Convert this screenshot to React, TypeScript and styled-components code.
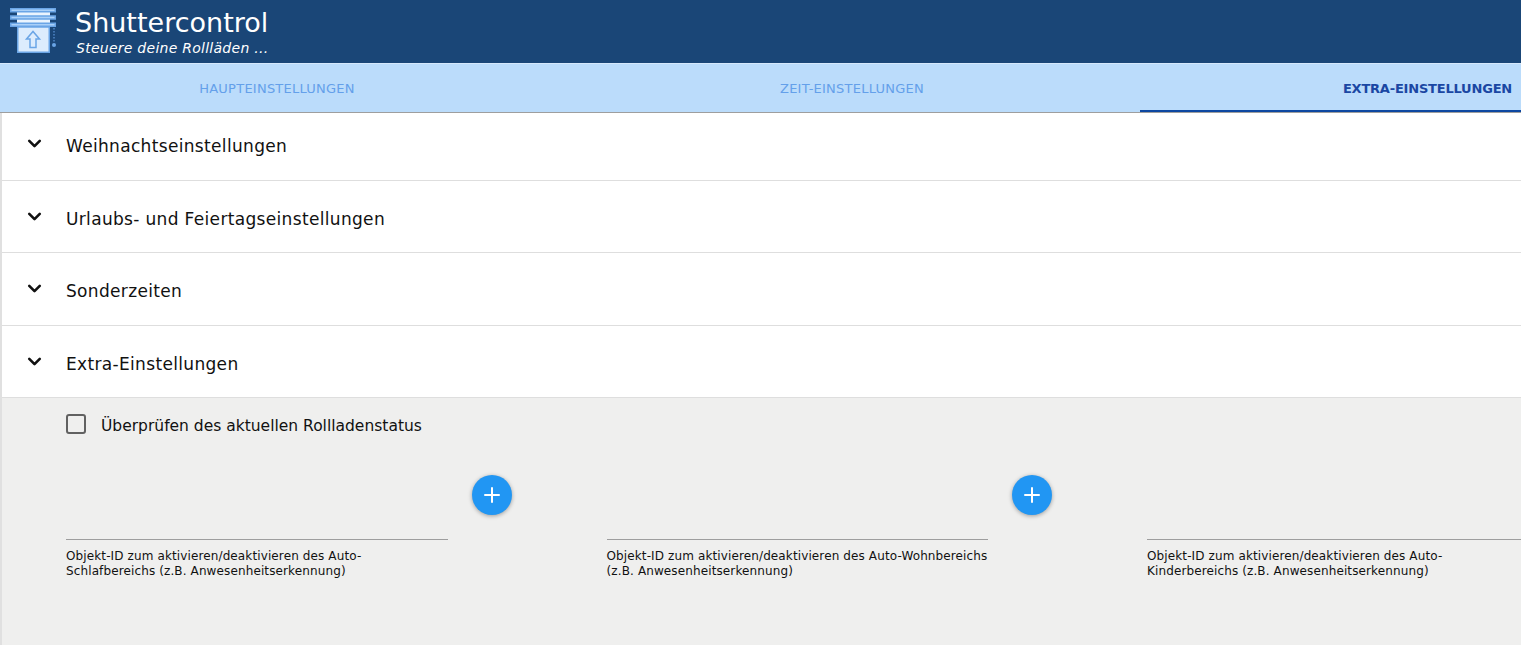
import React from 'react';
import styled, { createGlobalStyle } from 'styled-components';
import { ChevronDown, Plus } from 'lucide-react';

const GlobalStyle = createGlobalStyle`
  html, body {
    margin: 0;
    padding: 0;
    background: #fff;
    overflow: hidden;
  }
  body {
    font-family: "DejaVu Sans", "Liberation Sans", sans-serif;
    color: #000;
  }
`;

const Page = styled.div`
  width: 1521px;
  height: 645px;
  display: flex;
  flex-direction: column;
  overflow: hidden;
`;

const Header = styled.header`
  height: 63px;
  flex: none;
  background: #1a4677;
  display: flex;
  align-items: flex-start;
  padding-left: 10px;
  gap: 17px;
  box-sizing: border-box;
`;

const LogoWrap = styled.div`
  padding-top: 8px;
  line-height: 0;
`;

const Titles = styled.div`
  display: flex;
  flex-direction: column;
  color: #fff;
`;

const Title = styled.div`
  font-size: 27px;
  line-height: 32px;
  margin-top: 7px;
`;

const Subtitle = styled.div`
  font-size: 14px;
  line-height: 18px;
  font-style: italic;
  letter-spacing: 0.26px;
  padding-left: 1px;
`;

const Tabs = styled.nav`
  height: 50px;
  flex: none;
  display: flex;
  background: #bbdcfb;
  border-top: 1px solid #d5e8fb;
  border-bottom: 1px solid #9e9e9e;
  box-sizing: border-box;
`;

const Tab = styled.div<{ $active?: boolean; $width: number; $pad: number }>`
  width: ${(p) => p.$width}px;
  flex: none;
  box-sizing: border-box;
  display: flex;
  align-items: center;
  justify-content: ${(p) => (p.$active ? 'flex-end' : 'center')};
  padding-right: ${(p) => p.$pad}px;
  font-size: 13px;
  letter-spacing: ${(p) => (p.$active ? '-0.2px' : '0.24px')};
  font-weight: ${(p) => (p.$active ? 700 : 400)};
  color: ${(p) => (p.$active ? '#1a47a3' : '#64a0ea')};
  box-shadow: ${(p) => (p.$active ? 'inset 0 -2px 0 #0d47a1' : 'none')};
`;

const Accordion = styled.div`
  flex: 1;
  display: flex;
  flex-direction: column;
  border-left: 2px solid #e0e0e0;
  min-height: 0;
`;

const Row = styled.div<{ $height: number; $first?: boolean }>`
  height: ${(p) => p.$height}px;
  flex: none;
  box-sizing: border-box;
  border-bottom: 1px solid #dedede;
  display: flex;
  align-items: center;
  padding: ${(p) => (p.$first ? '0 0 2px 22px' : '4px 0 0 22px')};
`;

const Chevron = styled(ChevronDown)`
  flex: none;
  width: 21px;
  height: 21px;
  margin-top: -5px;
  color: #111;
`;

const RowTitle = styled.div`
  margin-left: 21px;
  font-size: 17px;
  letter-spacing: 0.33px;
  color: #111;
`;

const Panel = styled.div`
  flex: 1;
  background: #efefee;
  padding: 15px 0 0 64px;
  overflow: hidden;
`;

const CheckRow = styled.div`
  display: flex;
  align-items: center;
  gap: 15px;
  height: 22px;
`;

const CheckBox = styled.div`
  width: 20px;
  height: 20px;
  box-sizing: border-box;
  border: 2px solid #616161;
  border-radius: 3px;
`;

const CheckLabel = styled.div`
  font-size: 15.5px;
  color: #111;
  margin-top: 4px;
`;

const Columns = styled.div`
  display: flex;
  margin-top: 40px;
  width: 1700px;
`;

const Column = styled.div`
  width: 540.5px;
  flex: none;
`;

const AddCell = styled.div`
  width: 445.6px;
  display: flex;
  justify-content: flex-end;
`;

const AddButton = styled.div`
  width: 40px;
  height: 40px;
  border-radius: 50%;
  background: #2196f3;
  color: #fff;
  display: flex;
  align-items: center;
  justify-content: center;
  box-shadow: 0 1px 4px rgba(0, 0, 0, 0.35);
`;

const Field = styled.div`
  width: 381.7px;
  margin-top: 24px;
  border-top: 1px solid #9e9e9e;
  padding-top: 9px;
  font-size: 12px;
  line-height: 15px;
  letter-spacing: 0.12px;
  color: #111;
`;

const Logo = () => (
  <svg width="48" height="48" viewBox="0 0 48 48">
    <rect x="7" y="3" width="33" height="14" fill="#eaf4fe" />
    <rect x="7.75" y="19" width="31.5" height="25.25" fill="#dcecfd" stroke="#6aa5e6" strokeWidth="1.5" />
    <rect x="0.75" y="0.75" width="44.5" height="3" fill="#a9d0f8" stroke="#6aa5e6" strokeWidth="1.5" />
    <rect x="0.75" y="8" width="44.5" height="3" fill="#a9d0f8" stroke="#6aa5e6" strokeWidth="1.5" />
    <rect x="0.75" y="15.25" width="44.5" height="3" fill="#a9d0f8" stroke="#6aa5e6" strokeWidth="1.5" />
    <path d="M16.5 31 L23 23.5 L29.5 31 H26 V39.5 H20 V31 Z" fill="#dcecfd" stroke="#6aa5e6" strokeWidth="1.5" strokeLinejoin="miter" />
    <path d="M44 20 V35" stroke="#4f86c6" strokeWidth="1.5" strokeDasharray="1.5 1.5" />
    <circle cx="44" cy="37" r="2" fill="#6aa5e6" />
  </svg>
);

const sections: [string, number][] = [
  ['Weihnachtseinstellungen', 68],
  ['Urlaubs- und Feiertagseinstellungen', 72],
  ['Sonderzeiten', 73],
  ['Extra-Einstellungen', 72],
];

const fields = [
  'Objekt-ID zum aktivieren/deaktivieren des Auto-Schlafbereichs (z.B. Anwesenheitserkennung)',
  'Objekt-ID zum aktivieren/deaktivieren des Auto-Wohnbereichs (z.B. Anwesenheitserkennung)',
  'Objekt-ID zum aktivieren/deaktivieren des Auto-Kinderbereichs (z.B. Anwesenheitserkennung)',
];

export default function App() {
  return (
    <Page>
      <GlobalStyle />
      <Header>
        <LogoWrap>
          <Logo />
        </LogoWrap>
        <Titles>
          <Title>Shuttercontrol</Title>
          <Subtitle>Steuere deine Rollläden ...</Subtitle>
        </Titles>
      </Header>
      <Tabs>
        <Tab $width={564} $pad={10}>HAUPTEINSTELLUNGEN</Tab>
        <Tab $width={576} $pad={0}>ZEIT-EINSTELLUNGEN</Tab>
        <Tab $active $width={381} $pad={9}>EXTRA-EINSTELLUNGEN</Tab>
      </Tabs>
      <Accordion>
        {sections.map(([title, height], i) => (
          <Row key={title} $height={height} $first={i === 0}>
            <Chevron strokeWidth={3} />
            <RowTitle>{title}</RowTitle>
          </Row>
        ))}
        <Panel>
          <CheckRow>
            <CheckBox />
            <CheckLabel>Überprüfen des aktuellen Rollladenstatus</CheckLabel>
          </CheckRow>
          <Columns>
            {fields.map((text) => (
              <Column key={text}>
                <AddCell>
                  <AddButton>
                    <Plus size={24} strokeWidth={2} />
                  </AddButton>
                </AddCell>
                <Field>{text}</Field>
              </Column>
            ))}
          </Columns>
        </Panel>
      </Accordion>
    </Page>
  );
}
